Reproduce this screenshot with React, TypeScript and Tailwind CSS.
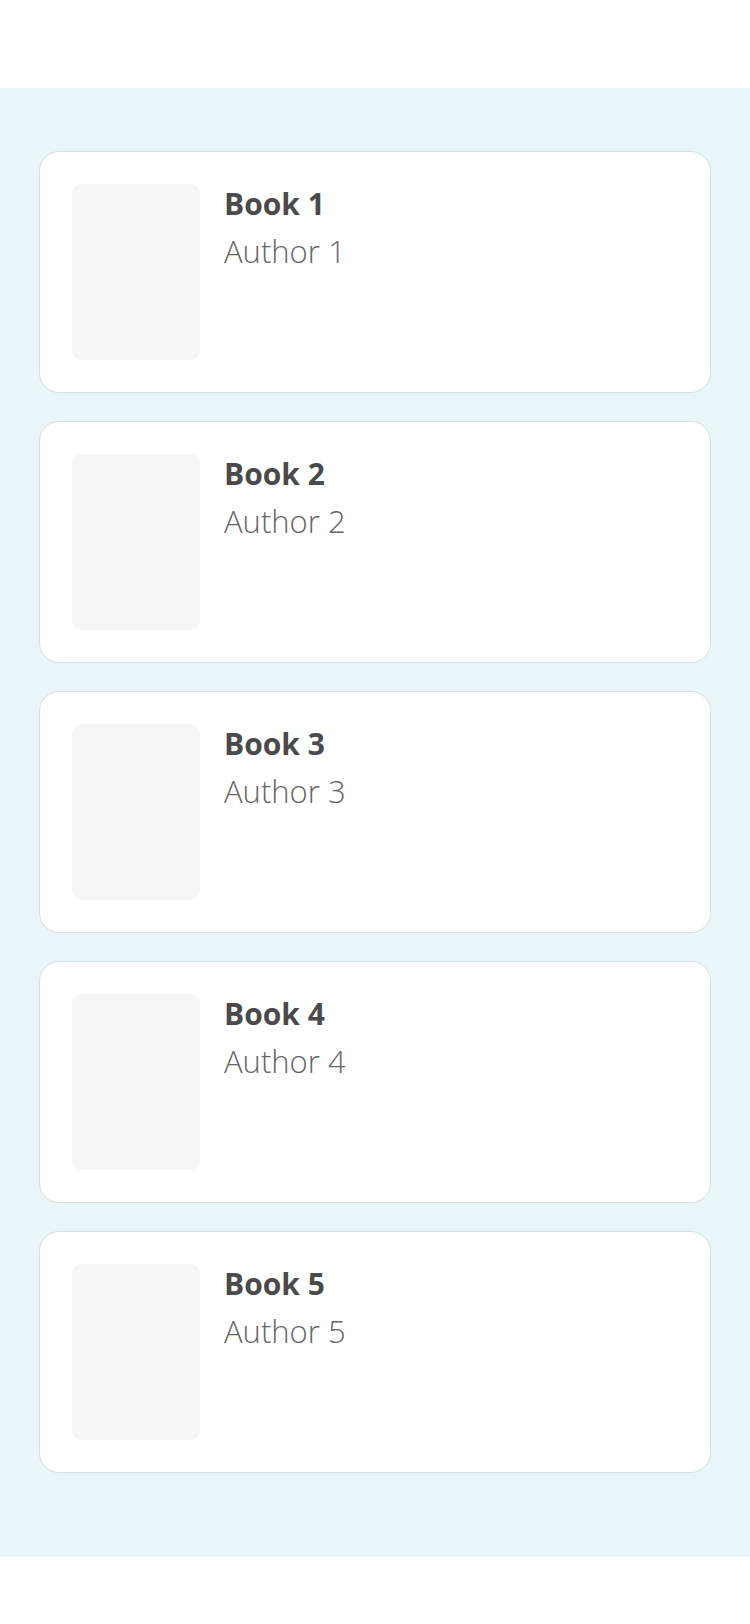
const books = [1, 2, 3, 4, 5].map((n) => ({ title: `Book ${n}`, author: `Author ${n}` }));

export default function App() {
  return (
    <div className="min-h-[1624px] bg-white" style={{ fontFamily: "'Open Sans', 'Noto Sans', sans-serif" }}>
      <div className="h-[88px]" />
      <div className="bg-[#eaf5fa] px-[39px] pt-[63px] pb-[84px]">
        <div className="flex flex-col gap-[28px]">
          {books.map((book) => (
            <div
              key={book.title}
              className="flex h-[242px] gap-[24px] rounded-[20px] border border-[#d5e0e5] bg-white px-[32px] pt-[32px]"
            >
              <div className="h-[176px] w-[128px] shrink-0 rounded-[10px] bg-[#f6f6f6]" />
              <div className="flex flex-col">
                <div className="text-[30px] font-bold leading-[40px] text-[#4a4a4a]">{book.title}</div>
                <div className="mt-[6px] text-[31px] font-light leading-[42px] text-[#666666]">{book.author}</div>
              </div>
            </div>
          ))}
        </div>
      </div>
    </div>
  );
}
